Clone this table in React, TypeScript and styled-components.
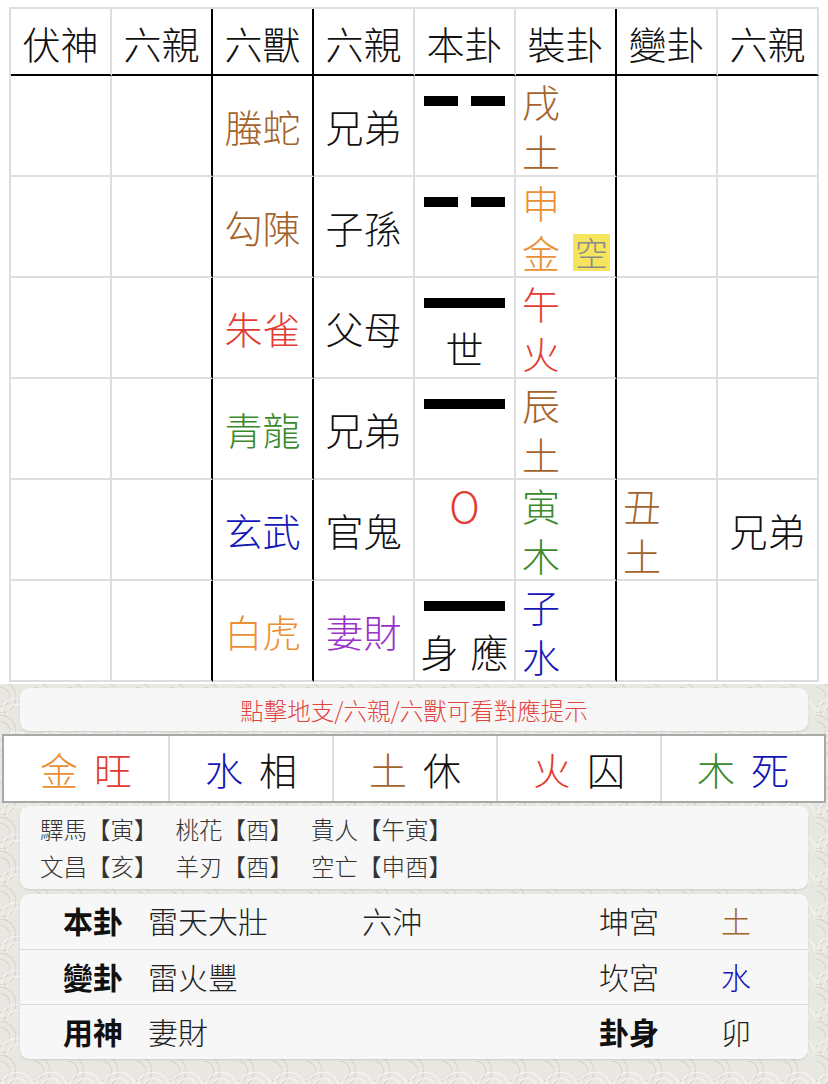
import React from 'react';
import styled, { createGlobalStyle } from 'styled-components';

const COLOR = {
  earth: '#a4632b',
  metal: '#eb8f34',
  fire: '#e23b32',
  wood: '#3b8a2b',
  water: '#1616b8',
  purple: '#9b32c9',
  ink: '#111111',
};

type Tone = keyof typeof COLOR;

const GlobalStyle = createGlobalStyle`
  html, body { margin: 0; padding: 0; }
  body {
    font-family: "Noto Sans CJK TC", "Noto Sans CJK SC", sans-serif;
    font-weight: 300;
    color: #111;
    background-color: #e9e7e1;
    background-image:
      radial-gradient(circle at 50% 100%, transparent 0 9px, rgba(255,255,255,0.5) 9px 10.5px, transparent 10.5px 15px, rgba(255,255,255,0.5) 15px 16.5px, transparent 16.5px),
      radial-gradient(circle at 0% 50%, transparent 0 9px, rgba(196,192,182,0.4) 9px 10.5px, transparent 10.5px 15px, rgba(196,192,182,0.4) 15px 16.5px, transparent 16.5px);
    background-size: 34px 34px, 34px 34px;
  }
`;

const Page = styled.div`
  width: 828px;
  min-height: 1084px;
`;

const TopSection = styled.div`
  background: #ffffff;
  padding: 7px 9px 2px;
`;

const Grid = styled.div`
  display: grid;
  grid-template-columns: repeat(8, 101px);
  grid-template-rows: 67px repeat(6, 101px);
  border-top: 2px solid #dedede;
  border-left: 2px solid #dedede;
  width: max-content;
`;

const Cell = styled.div<{ $dark?: boolean; $head?: boolean }>`
  box-sizing: border-box;
  border-right: 2px solid ${(p) => (p.$dark ? '#000' : '#dedede')};
  border-bottom: 2px solid ${(p) => (p.$head ? '#000' : '#dedede')};
  font-size: 38px;
`;

const HeadCell = styled(Cell)`
  display: flex;
  align-items: center;
  justify-content: center;
  padding-top: 3px;
  line-height: 1;
  color: #111;
`;

const CenterCell = styled(Cell)<{ $tone: Tone }>`
  display: flex;
  align-items: center;
  justify-content: center;
  line-height: 1;
  color: ${(p) => COLOR[p.$tone]};
`;

const YaoCell = styled(Cell)`
  display: flex;
  flex-direction: column;
  align-items: center;
  padding-top: 20px;
`;

const Bar = styled.div`
  width: 81px;
  height: 10px;
  display: flex;
  justify-content: space-between;
`;

const Segment = styled.div<{ $half?: boolean }>`
  background: #000;
  height: 10px;
  width: ${(p) => (p.$half ? '34px' : '81px')};
`;

const Moving = styled.div`
  height: 10px;
  line-height: 10px;
  margin-top: 0;
  font-size: 42px;
  font-weight: 300;
  color: ${COLOR.fire};
`;

const Marker = styled.div`
  margin-top: 21px;
  display: flex;
  gap: 12px;
  font-size: 38px;
  line-height: 1;
  color: #111;
`;

const StackCell = styled(Cell)`
  padding-left: 6px;
  line-height: 50px;
`;

const StackLine = styled.div<{ $tone: Tone }>`
  display: flex;
  align-items: center;
  color: ${(p) => COLOR[p.$tone]};
`;

const EmptyBadge = styled.span`
  margin-left: 13px;
  background: #f6e55c;
  color: #8a8a8a;
  font-size: 33px;
  line-height: 37px;
  height: 37px;
  padding: 0 2px;
`;

const Bottom = styled.div`
  padding-top: 4px;
  padding-bottom: 24px;
`;

const Card = styled.div`
  margin: 0 20px;
  background: #f7f7f7;
  border-radius: 9px;
  box-shadow: 0 1px 2px rgba(0, 0, 0, 0.12);
`;

const Notice = styled(Card)`
  height: 43px;
  display: flex;
  align-items: center;
  justify-content: center;
  color: #e2453f;
  font-size: 23.5px;
`;

const WxTable = styled.div`
  margin: 3px 2px 0;
  height: 69px;
  box-sizing: border-box;
  display: grid;
  grid-template-columns: repeat(5, 1fr);
  border: 2px solid #a8a8a8;
  background: #fff;
`;

const WxCell = styled.div`
  display: flex;
  align-items: center;
  justify-content: center;
  gap: 16px;
  font-size: 38px;
  line-height: 1;
  & + & {
    border-left: 2px solid #dedede;
  }
`;

const Tinted = styled.span<{ $tone: Tone }>`
  color: ${(p) => COLOR[p.$tone]};
`;

const ShenSha = styled(Card)`
  margin-top: 3px;
  padding: 5px 20px 4px;
  font-size: 23.5px;
  line-height: 37px;
  color: #333;
`;

const ShenLine = styled.div`
  display: flex;
  gap: 18px;
`;

const Info = styled(Card)`
  margin-top: 5px;
`;

const InfoRow = styled.div`
  display: grid;
  grid-template-columns: 85px 214px 237px 122px 1fr;
  align-items: center;
  height: 55px;
  padding-left: 43px;
  padding-bottom: 3px;
  box-sizing: border-box;
  font-size: 30px;
  line-height: 1;
  color: #222;
  & + & {
    border-top: 1px solid #dadada;
  }
`;

const Label = styled.span`
  font-weight: 700;
  color: #111;
`;

type Row = {
  beast: string;
  beastTone: Tone;
  rel: string;
  relTone: Tone;
  yao: 'yin' | 'yang' | 'moving';
  mark?: string[];
  branch: [string, string];
  branchTone: Tone;
  empty?: boolean;
  change?: { branch: [string, string]; tone: Tone; rel: string };
};

const rows: Row[] = [
  { beast: '螣蛇', beastTone: 'earth', rel: '兄弟', relTone: 'ink', yao: 'yin', branch: ['戌', '土'], branchTone: 'earth' },
  { beast: '勾陳', beastTone: 'earth', rel: '子孫', relTone: 'ink', yao: 'yin', branch: ['申', '金'], branchTone: 'metal', empty: true },
  { beast: '朱雀', beastTone: 'fire', rel: '父母', relTone: 'ink', yao: 'yang', mark: ['世'], branch: ['午', '火'], branchTone: 'fire' },
  { beast: '青龍', beastTone: 'wood', rel: '兄弟', relTone: 'ink', yao: 'yang', branch: ['辰', '土'], branchTone: 'earth' },
  { beast: '玄武', beastTone: 'water', rel: '官鬼', relTone: 'ink', yao: 'moving', branch: ['寅', '木'], branchTone: 'wood', change: { branch: ['丑', '土'], tone: 'earth', rel: '兄弟' } },
  { beast: '白虎', beastTone: 'metal', rel: '妻財', relTone: 'purple', yao: 'yang', mark: ['身', '應'], branch: ['子', '水'], branchTone: 'water' },
];

const headers = ['伏神', '六親', '六獸', '六親', '本卦', '裝卦', '變卦', '六親'];
const darkCols = [1, 2, 5];

const wuxing: { el: string; elTone: Tone; st: string; stTone: Tone }[] = [
  { el: '金', elTone: 'metal', st: '旺', stTone: 'fire' },
  { el: '水', elTone: 'water', st: '相', stTone: 'ink' },
  { el: '土', elTone: 'earth', st: '休', stTone: 'ink' },
  { el: '火', elTone: 'fire', st: '囚', stTone: 'ink' },
  { el: '木', elTone: 'wood', st: '死', stTone: 'water' },
];

function Yao({ row }: { row: Row }) {
  return (
    <YaoCell>
      {row.yao === 'moving' ? (
        <Moving>O</Moving>
      ) : (
        <Bar>
          {row.yao === 'yin' ? (
            <>
              <Segment $half />
              <Segment $half />
            </>
          ) : (
            <Segment />
          )}
        </Bar>
      )}
      {row.mark && (
        <Marker>
          {row.mark.map((m) => (
            <span key={m}>{m}</span>
          ))}
        </Marker>
      )}
    </YaoCell>
  );
}

export default function App() {
  return (
    <Page>
      <GlobalStyle />
      <TopSection>
        <Grid>
          {headers.map((h, i) => (
            <HeadCell key={`h${i}`} $head $dark={darkCols.includes(i)}>
              {h}
            </HeadCell>
          ))}
          {rows.map((r, i) => (
            <React.Fragment key={`r${i}`}>
              <CenterCell $tone="ink" />
              <CenterCell $tone="ink" $dark />
              <CenterCell $tone={r.beastTone} $dark>{r.beast}</CenterCell>
              <CenterCell $tone={r.relTone}>{r.rel}</CenterCell>
              <Yao row={r} />
              <StackCell $dark>
                <StackLine $tone={r.branchTone}>{r.branch[0]}</StackLine>
                <StackLine $tone={r.branchTone}>
                  {r.branch[1]}
                  {r.empty && <EmptyBadge>空</EmptyBadge>}
                </StackLine>
              </StackCell>
              <StackCell>
                {r.change && (
                  <>
                    <StackLine $tone={r.change.tone}>{r.change.branch[0]}</StackLine>
                    <StackLine $tone={r.change.tone}>{r.change.branch[1]}</StackLine>
                  </>
                )}
              </StackCell>
              <CenterCell $tone="ink">{r.change ? r.change.rel : ''}</CenterCell>
            </React.Fragment>
          ))}
        </Grid>
      </TopSection>
      <Bottom>
        <Notice>點擊地支/六親/六獸可看對應提示</Notice>
        <WxTable>
          {wuxing.map((w) => (
            <WxCell key={w.el}>
              <Tinted $tone={w.elTone}>{w.el}</Tinted>
              <Tinted $tone={w.stTone}>{w.st}</Tinted>
            </WxCell>
          ))}
        </WxTable>
        <ShenSha>
          <ShenLine>
            <span>驛馬【寅】</span>
            <span>桃花【酉】</span>
            <span>貴人【午寅】</span>
          </ShenLine>
          <ShenLine>
            <span>文昌【亥】</span>
            <span>羊刃【酉】</span>
            <span>空亡【申酉】</span>
          </ShenLine>
        </ShenSha>
        <Info>
          <InfoRow>
            <Label>本卦</Label>
            <span>雷天大壯</span>
            <span>六沖</span>
            <span>坤宮</span>
            <Tinted $tone="earth">土</Tinted>
          </InfoRow>
          <InfoRow>
            <Label>變卦</Label>
            <span>雷火豐</span>
            <span />
            <span>坎宮</span>
            <Tinted $tone="water">水</Tinted>
          </InfoRow>
          <InfoRow>
            <Label>用神</Label>
            <span>妻財</span>
            <span />
            <Label>卦身</Label>
            <span>卯</span>
          </InfoRow>
        </Info>
      </Bottom>
    </Page>
  );
}
